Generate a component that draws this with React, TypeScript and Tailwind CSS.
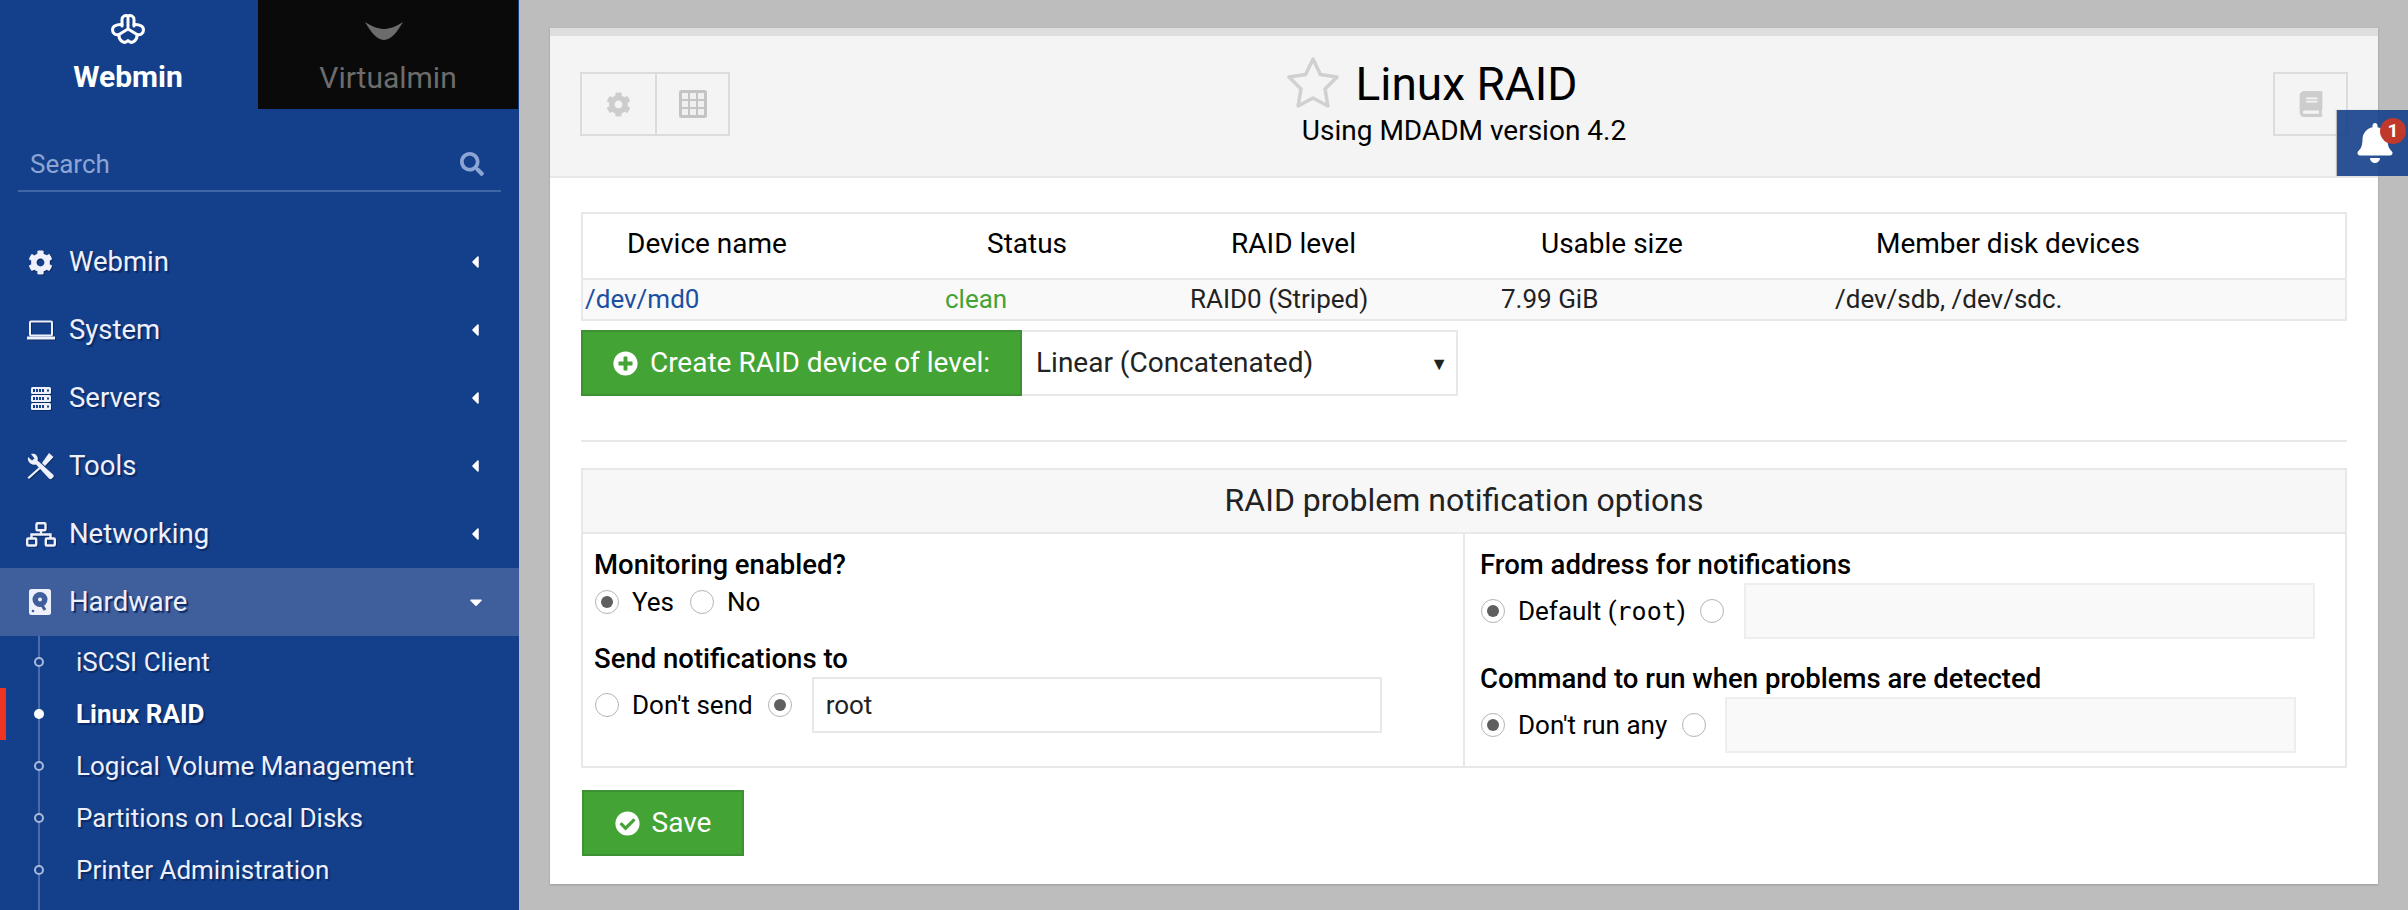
import { FaCog, FaSearch, FaBell, FaBook, FaPlusCircle, FaCheckCircle, FaCaretLeft, FaCaretDown } from 'react-icons/fa'

const MENU = ['Webmin', 'System', 'Servers', 'Tools', 'Networking']
const SUBMENU = ['iSCSI Client', 'Linux RAID', 'Logical Volume Management', 'Partitions on Local Disks', 'Printer Administration']

function WebminLogo() {
  return (
    <svg width="34" height="32" viewBox="0 0 34 32" fill="none" stroke="#fff" strokeWidth="3" strokeLinejoin="round" strokeLinecap="round">
      <path d="M11 13V6.5a4 4 0 0 1 6-3.5 4 4 0 0 1 6 3.5V13" />
      <path d="M17 3.5V14" />
      <path d="M11 11.5C5 11 1.5 13.5 1.5 17c0 3.5 3.5 5.5 6.5 4.5C7.5 27 13 32 17 27.5c4 4.500 9.500-.5 9-6 3 1 6.500-1 6.500-4.500 0-3.500-3.500-6-9.500-5.500" />
      <path d="M8 21.500L17 16l9 5.500" />
    </svg>
  )
}

function MenuIcon({ name }: { name: string }) {
  if (name === 'Webmin') return <FaCog size={25} />
  if (name === 'System')
    return (
      <svg width="28" height="20" viewBox="0 0 28 20" fill="none" stroke="currentColor" strokeWidth="2">
        <rect x="3" y="1.500" width="22" height="14" rx="1" />
        <path d="M0 18h28" strokeWidth="3" />
      </svg>
    )
  if (name === 'Servers')
    return (
      <svg width="20" height="23" viewBox="0 0 20 23" fill="currentColor">
        {[0, 8, 16].map((y) => (
          <g key={y}>
            <rect x="0" y={y} width="20" height="7" rx="1.500" />
            <path d={`M2 ${y + 2}h2v3H2zM5 ${y + 2}h2v3H5zM8 ${y + 2}h2v3H8zM11 ${y + 2}h2v3h-2zM16 ${y + 2.500}h2v2h-2z`} fill="#14408b" />
          </g>
        ))}
      </svg>
    )
  if (name === 'Tools')
    return (
      <svg width="27" height="27" viewBox="0 0 27 27" fill="currentColor">
        <path d="M22 0l4.500 4L18 13l-3-3z" />
        <path d="M15 11.500l1.500 1.500L2 26l-1.500-1.500z" />
        <path d="M1 4l4 3.500 2.500-2L4 1c4-1.500 8 2 6.500 6.500L26 21.500c1 1 1 2 0 3l-1 1c-1 1-2 1-3 0L9 11.500C4.500 12.500 0 9 1 4z" />
      </svg>
    )
  return (
    <svg width="30" height="25" viewBox="0 0 30 25" fill="none" stroke="currentColor" strokeWidth="2.400">
      <rect x="10.500" y="1.200" width="9" height="7" rx="1" />
      <rect x="1.200" y="16.500" width="9" height="7" rx="1" />
      <rect x="19.800" y="16.500" width="9" height="7" rx="1" />
      <path d="M15 8v4.500M5.500 16v-3.500h19V16" />
    </svg>
  )
}

function HardwareIcon() {
  return (
    <svg width="22" height="26" viewBox="0 0 22 26">
      <rect width="22" height="26" rx="2.500" fill="currentColor" />
      <circle cx="11" cy="10.500" r="7.500" fill="#3f5f9c" />
      <circle cx="11" cy="10.500" r="2" fill="currentColor" />
      <path d="M11 13l5 8" stroke="#3f5f9c" strokeWidth="3" />
      <circle cx="4" cy="22" r="1.300" fill="#3f5f9c" />
    </svg>
  )
}

function Radio({ checked }: { checked?: boolean }) {
  return (
    <span className="flex h-6 w-6 shrink-0 items-center justify-center rounded-full border border-[#b4b4b4] bg-white">
      {checked && <span className="h-3 w-3 rounded-full bg-[#5f5f5f]" />}
    </span>
  )
}

function Sidebar() {
  return (
    <aside className="flex h-[910px] w-[519px] shrink-0 flex-col overflow-hidden bg-[#14408b]">
      <div className="flex h-[109px]">
        <div className="flex w-[258px] flex-col items-center pt-[13px] pr-[2px] text-white">
          <WebminLogo />
          <span className="mt-[14px] text-[30px] leading-[36px] font-bold">Webmin</span>
        </div>
        <div className="flex w-[260px] flex-col items-center bg-[#0a0a0a] pt-[22px] text-[#6c6c6c]">
          <svg width="38" height="18" viewBox="0 0 38 18" fill="currentColor" className="mr-[8px]">
            <path d="M0 0c8 5 14 7 19 7s11-2 19-7c-5 9-12 18-19 18S5 9 0 0z" />
          </svg>
          <span className="mt-[20px] text-[30px] leading-[36px]">Virtualmin</span>
        </div>
      </div>
      <div className="mx-[18px] mt-[39px] flex h-[44px] items-center justify-between border-b-2 border-[#3f67a8] pr-[17px] pb-[10px] pl-[12px] text-[#8ca5d4]">
        <span className="text-[26px]">Search</span>
        <FaSearch size={24} />
      </div>
      <nav className="mt-[36px] flex flex-col text-[27.500px] text-[#eef0fb] [text-shadow:2px_2px_1px_#0c2a66]">
        {MENU.map((name) => (
          <div key={name} className="flex h-[68px] items-center pr-[34px]">
            <span className="flex w-[69px] justify-center pl-[12px] [filter:drop-shadow(1px_1px_0_#0c2a66)]">
              <MenuIcon name={name} />
            </span>
            <span className="flex-1">{name}</span>
            <FaCaretLeft size={20} className="text-white" />
          </div>
        ))}
        <div className="flex h-[68px] items-center bg-[#3f5f9c] pr-[33px]">
          <span className="flex w-[69px] justify-center pl-[10px]">
            <HardwareIcon />
          </span>
          <span className="flex-1">Hardware</span>
          <FaCaretDown size={20} className="text-white" />
        </div>
        <div className="relative flex flex-col text-[26px]">
          <div className="absolute top-0 bottom-[-100px] left-[38px] w-[2px] bg-[#4a6cab]" />
          {SUBMENU.map((name) => {
            const active = name === 'Linux RAID'
            return (
              <div key={name} className="relative flex h-[52px] items-center pl-[76px]">
                {active && <div className="absolute top-0 left-0 h-[52px] w-[6px] bg-[#f03322]" />}
                {active ? (
                  <span className="absolute left-[34px] h-[10px] w-[10px] rounded-full bg-white" />
                ) : (
                  <span className="absolute left-[34px] h-[10px] w-[10px] rounded-full border-2 border-[#a9b8d8] bg-[#14408b]" />
                )}
                <span className={active ? 'font-bold text-white' : ''}>{name}</span>
              </div>
            )
          })}
        </div>
      </nav>
    </aside>
  )
}

function CardHeader() {
  return (
    <header className="grid h-[142px] grid-cols-[150px_1fr_150px] border-b-2 border-[#e8e8e8] bg-[#f4f4f4] px-[30px]">
      <div className="mt-[36px] flex h-[64px] w-[150px] border-2 border-[#dcdcdc]">
        <div className="flex w-[75px] items-center justify-center border-r-2 border-[#dcdcdc] text-[#cdcdcd]">
          <FaCog size={25} />
        </div>
        <div className="flex flex-1 items-center justify-center">
          <svg width="28" height="28" viewBox="0 0 28 28">
            <rect width="28" height="28" rx="2.500" fill="#c4c4c4" />
            {[3, 11, 19].flatMap((y) =>
              [3, 11, 19].map((x) => <rect key={`${x}-${y}`} x={x} y={y} width="6" height="6" fill="#f0f0f0" />),
            )}
          </svg>
        </div>
      </div>
      <div className="flex flex-col items-center pt-[20px] text-black">
        <div className="relative ml-[5px]">
          <svg width="54" height="52" viewBox="0 0 54 52" fill="none" stroke="#d0d0d0" strokeWidth="3.500" strokeLinejoin="round" className="absolute top-0 left-[-69px]">
            <path d="M27 3l7.400 15.600L51 21 39 33l2.900 17L27 42l-14.900 8L15 33 3 21l16.600-2.400z" />
          </svg>
          <span className="block text-[46px] leading-[56px]">Linux RAID</span>
        </div>
        <span className="mt-[3px] text-[28px] leading-[32px]">Using MDADM version 4.2</span>
      </div>
      <div className="mt-[36px] flex h-[64px] w-[75px] items-center justify-center justify-self-end border-2 border-[#dcdcdc] text-[#cdcdcd]">
        <FaBook size={26} />
      </div>
    </header>
  )
}

function DeviceTable() {
  return (
    <table className="w-[1766px] table-fixed border-2 border-[#e8e8e8] text-[26px]">
      <tbody>
        <tr className="h-[66px] border-b-2 border-[#e8e8e8] text-[28px] text-black">
          <td className="w-[362px] pb-[4px] pl-[44px]">Device name</td>
          <td className="w-[245px] pb-[4px] pl-[43px]">Status</td>
          <td className="w-[310px] pb-[4px] pl-[42px]">RAID level</td>
          <td className="w-[335px] pb-[4px] pl-[42px]">Usable size</td>
          <td className="pb-[4px] pl-[42px]">Member disk devices</td>
        </tr>
        <tr className="h-[40px] bg-[#f9f9f9] text-[#222]">
          <td className="pl-[2px] text-[#1b4fa0]">/dev/md0</td>
          <td className="pl-[1px] text-[#43a335]">clean</td>
          <td className="pl-[1px]">RAID0 (Striped)</td>
          <td className="pl-[2px]">7.99 GiB</td>
          <td className="pl-[1px]">/dev/sdb, /dev/sdc.</td>
        </tr>
      </tbody>
    </table>
  )
}

function FormColumn({ className, children }: { className?: string; children: React.ReactNode }) {
  return <div className={className}>{children}</div>
}

function App() {
  return (
    <div className="relative flex h-[910px] w-[2408px] overflow-hidden bg-[#bdbdbd] font-['Roboto',sans-serif]">
      <Sidebar />
      <main className="mt-[28px] ml-[31px] flex h-[856px] w-[1828px] flex-col border-t-[8px] border-[#dedede] bg-white shadow-[0_1px_2px_#999]">
        <CardHeader />
        <div className="px-[31px] pt-[34px]">
          <DeviceTable />
          <div className="mt-[9px] flex h-[66px] w-[877px]">
            <button className="flex w-[441px] items-center justify-center gap-[12px] border-2 border-[#3e9133] bg-[#43a335] text-[28px] text-white">
              <FaPlusCircle size={25} />
              Create RAID device of level:
            </button>
            <div className="flex flex-1 items-center justify-between border-2 border-l-0 border-[#e8e8e8] pr-[8px] pl-[14px] text-[28px] text-[#222]">
              <span>Linear (Concatenated)</span>
              <span className="text-[18px]">▼</span>
            </div>
          </div>
          <div className="mt-[44px] h-[2px] w-[1766px] bg-[#e8e8e8]" />
          <section className="mt-[26px] flex h-[300px] w-[1766px] flex-col border-2 border-[#e8e8e8] text-[26px] text-black">
            <div className="flex h-[64px] shrink-0 items-center justify-center border-b-2 border-[#e8e8e8] bg-[#f7f7f7] pb-[3px] text-[32px] text-[#222]">
              RAID problem notification options
            </div>
            <div className="flex flex-1">
              <FormColumn className="w-[882px] border-r-2 border-[#e8e8e8] pt-[15px] pl-[11px]">
                <div className="h-[32px] text-[27.500px] leading-[32px] font-medium">Monitoring enabled?</div>
                <div className="mt-[3px] ml-[1px] flex h-[36px] items-center">
                  <Radio checked />
                  <span className="mr-[16px] ml-[13px]">Yes</span>
                  <Radio />
                  <span className="ml-[13px]">No</span>
                </div>
                <div className="mt-[23px] h-[32px] text-[27.500px] leading-[32px] font-medium">Send notifications to</div>
                <div className="mt-[2px] ml-[1px] flex h-[56px] items-center">
                  <Radio />
                  <span className="mr-[15px] ml-[13px]">Don't send</span>
                  <Radio checked />
                  <div className="ml-[20px] flex h-[56px] w-[570px] items-center border-2 border-[#e8e8e8] pl-[12px] text-[#222]">root</div>
                </div>
              </FormColumn>
              <FormColumn className="flex-1 pt-[15px] pl-[15px]">
                <div className="h-[32px] text-[27.500px] leading-[32px] font-medium">From address for notifications</div>
                <div className="mt-[2px] ml-[1px] flex h-[56px] items-center">
                  <Radio checked />
                  <span className="mr-[14px] ml-[13px]">
                    Default (<span className="font-['DejaVu_Sans_Mono',monospace] text-[25px]">root</span>)
                  </span>
                  <Radio />
                  <div className="ml-[20px] h-[56px] w-[571px] border-2 border-[#eeeeee] bg-[#f9f9f9]" />
                </div>
                <div className="mt-[24px] h-[32px] text-[27.500px] leading-[32px] font-medium">Command to run when problems are detected</div>
                <div className="mt-[2px] ml-[1px] flex h-[56px] items-center">
                  <Radio checked />
                  <span className="mr-[15px] ml-[13px]">Don't run any</span>
                  <Radio />
                  <div className="ml-[19px] h-[56px] w-[571px] border-2 border-[#eeeeee] bg-[#f9f9f9]" />
                </div>
              </FormColumn>
            </div>
          </section>
          <button className="mt-[22px] ml-[1px] flex h-[66px] w-[162px] items-center justify-center gap-[12px] border-2 border-[#3e9133] bg-[#43a335] text-[28px] text-white">
            <FaCheckCircle size={25} />
            Save
          </button>
        </div>
      </main>
      <div className="absolute top-[110px] right-0 flex h-[66px] w-[71px] items-center justify-center bg-[#14408b]/90 pl-[5px] text-white shadow-[-1px_0_1px_#bbb]">
        <FaBell size={40} />
        <span className="absolute top-[8px] right-[2px] flex h-[26px] w-[26px] items-center justify-center rounded-full bg-[#c0392b] text-[19px] font-bold">1</span>
      </div>
    </div>
  )
}

export default App
